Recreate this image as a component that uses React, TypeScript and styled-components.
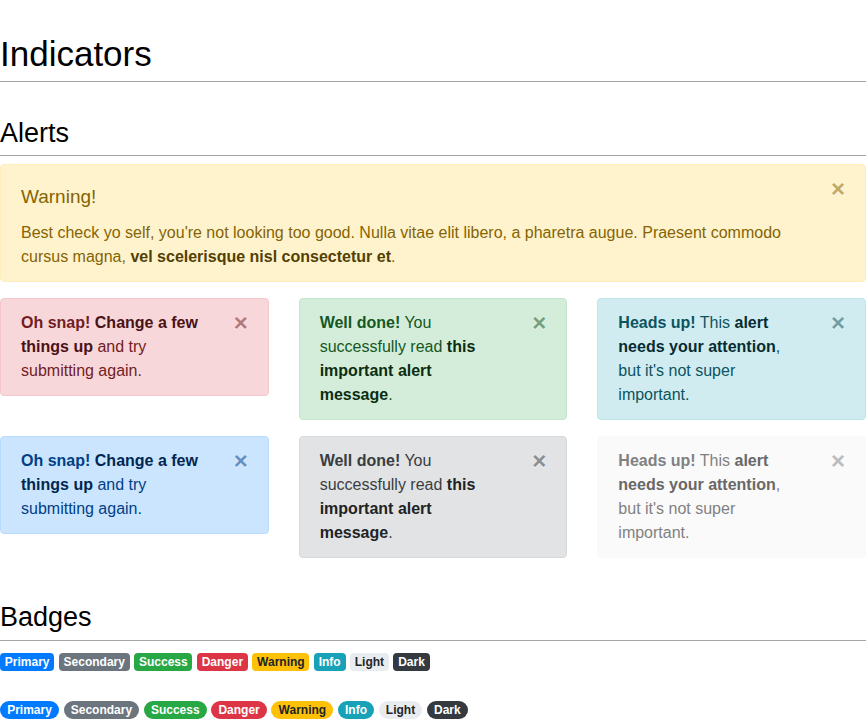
import React from "react";
import styled, { createGlobalStyle } from "styled-components";

type Variant = "primary" | "secondary" | "success" | "danger" | "warning" | "info" | "light" | "dark";

const alertTones: Record<Variant, { bg: string; border: string; text: string; link: string }> = {
	primary: { bg: "#cce5ff", border: "#b8daff", text: "#004085", link: "#002752" },
	secondary: { bg: "#e2e3e5", border: "#d6d8db", text: "#383d41", link: "#202326" },
	success: { bg: "#d4edda", border: "#c3e6cb", text: "#155724", link: "#0b2e13" },
	danger: { bg: "#f8d7da", border: "#f5c6cb", text: "#721c24", link: "#491217" },
	warning: { bg: "#fff3cd", border: "#ffeeba", text: "#856404", link: "#533f03" },
	info: { bg: "#d1ecf1", border: "#bee5eb", text: "#0c5460", link: "#062c33" },
	light: { bg: "#fafafa", border: "#f9f9f9", text: "#818182", link: "#686868" },
	dark: { bg: "#d6d8d9", border: "#c6c8ca", text: "#1b1e21", link: "#040505" },
};

const badgeTones: Record<Variant, { bg: string; text: string }> = {
	primary: { bg: "#007bff", text: "#fff" },
	secondary: { bg: "#6c757d", text: "#fff" },
	success: { bg: "#28a745", text: "#fff" },
	danger: { bg: "#dc3545", text: "#fff" },
	warning: { bg: "#ffc107", text: "#212529" },
	info: { bg: "#17a2b8", text: "#fff" },
	light: { bg: "#e9ecef", text: "#212529" },
	dark: { bg: "#343a40", text: "#fff" },
};

const GlobalStyle = createGlobalStyle`
	* { box-sizing: border-box; }
	body {
		margin: 0;
		font-family: "Liberation Sans", Arial, sans-serif;
		font-size: 16px;
		line-height: 1.5;
		color: #212529;
		background: #fff;
	}
`;

const Page = styled.div`
	width: 866px;
	overflow: hidden;
`;

const Title = styled.h1`
	margin: 35px 0 0;
	padding-bottom: 7px;
	border-bottom: 1px solid #a0a4a8;
	font-size: 35px;
	font-weight: 400;
	line-height: 1.1;
	color: #000;
`;

const SectionTitle = styled.h2<{ $top: number }>`
	margin: ${(p) => p.$top}px 0 8px;
	padding-bottom: 7px;
	border-bottom: 1px solid #a0a4a8;
	font-size: 27px;
	font-weight: 400;
	line-height: 1.1;
	color: #000;
`;

const Alert = styled.div<{ $tone: Variant }>`
	position: relative;
	margin-bottom: 16px;
	padding: 12px 64px 12px 20px;
	border: 1px solid ${(p) => alertTones[p.$tone].border};
	border-radius: 4px;
	background: ${(p) => alertTones[p.$tone].bg};
	color: ${(p) => alertTones[p.$tone].text};

	strong {
		font-weight: 700;
	}
`;

const AlertLink = styled.b<{ $tone: Variant }>`
	font-weight: 700;
	color: ${(p) => alertTones[p.$tone].link};
`;

const AlertHeading = styled.h4`
	margin: 10px 0 13px;
	font-size: 19px;
	font-weight: 400;
	line-height: 1.1;
	color: inherit;
`;

const AlertText = styled.p`
	margin: 0;
`;

const Close = styled.button`
	position: absolute;
	top: 0;
	right: 0;
	padding: 12px 20px;
	border: 0;
	background: transparent;
	font-family: "Liberation Sans", Arial, sans-serif;
	font-size: 24px;
	font-weight: 700;
	line-height: 1;
	color: inherit;
	text-shadow: 0 1px 0 #fff;
	opacity: 0.5;
	cursor: pointer;
`;

const AlertGrid = styled.div`
	display: grid;
	grid-template-columns: repeat(3, 1fr);
	column-gap: 30px;
	align-items: start;
`;

const BadgeRow = styled.div`
	line-height: 24px;
	margin-bottom: 24px;
`;

const Badge = styled.span<{ $tone: Variant; $pill?: boolean }>`
	display: inline-block;
	padding: 3px ${(p) => (p.$pill ? "7.2px" : "4.8px")};
	border-radius: ${(p) => (p.$pill ? "160px" : "4px")};
	background: ${(p) => badgeTones[p.$tone].bg};
	color: ${(p) => badgeTones[p.$tone].text};
	font-size: 12px;
	font-weight: 700;
	line-height: 1;
	white-space: nowrap;
	vertical-align: baseline;
`;

const DangerText = ({ tone }: { tone: Variant }) => (
	<>
		<strong>Oh snap!</strong> <AlertLink $tone={tone}>Change a few things up</AlertLink> and try submitting again.
	</>
);

const SuccessText = ({ tone }: { tone: Variant }) => (
	<>
		<strong>Well done!</strong> You successfully read <AlertLink $tone={tone}>this important alert message</AlertLink>.
	</>
);

const InfoText = ({ tone }: { tone: Variant }) => (
	<>
		<strong>Heads up!</strong> This <AlertLink $tone={tone}>alert needs your attention</AlertLink>, but it's not super important.
	</>
);

const SmallAlert = ({ tone, children }: { tone: Variant; children: React.ReactNode }) => (
	<Alert $tone={tone}>
		<Close type="button">&times;</Close>
		{children}
	</Alert>
);

const badgeNames: [Variant, string][] = [
	["primary", "Primary"],
	["secondary", "Secondary"],
	["success", "Success"],
	["danger", "Danger"],
	["warning", "Warning"],
	["info", "Info"],
	["light", "Light"],
	["dark", "Dark"],
];

const App = () => {
	return (
		<Page>
			<GlobalStyle />
			<Title>Indicators</Title>

			<SectionTitle $top={37}>Alerts</SectionTitle>
			<Alert $tone="warning">
				<Close type="button">&times;</Close>
				<AlertHeading>Warning!</AlertHeading>
				<AlertText>
					Best check yo self, you're not looking too good. Nulla vitae elit libero, a pharetra augue. Praesent commodo
					cursus magna, <AlertLink $tone="warning">vel scelerisque nisl consectetur et</AlertLink>.
				</AlertText>
			</Alert>

			<AlertGrid>
				<SmallAlert tone="danger"><DangerText tone="danger" /></SmallAlert>
				<SmallAlert tone="success"><SuccessText tone="success" /></SmallAlert>
				<SmallAlert tone="info"><InfoText tone="info" /></SmallAlert>
			</AlertGrid>
			<AlertGrid>
				<SmallAlert tone="primary"><DangerText tone="primary" /></SmallAlert>
				<SmallAlert tone="secondary"><SuccessText tone="secondary" /></SmallAlert>
				<SmallAlert tone="light"><InfoText tone="light" /></SmallAlert>
			</AlertGrid>

			<SectionTitle $top={29}>Badges</SectionTitle>
			<BadgeRow>
				{badgeNames.map(([tone, name]) => (
					<React.Fragment key={tone}>
						<Badge $tone={tone}>{name}</Badge>{" "}
					</React.Fragment>
				))}
			</BadgeRow>
			<BadgeRow>
				{badgeNames.map(([tone, name]) => (
					<React.Fragment key={tone}>
						<Badge $tone={tone} $pill>{name}</Badge>{" "}
					</React.Fragment>
				))}
			</BadgeRow>
		</Page>
	);
};

export default App;
